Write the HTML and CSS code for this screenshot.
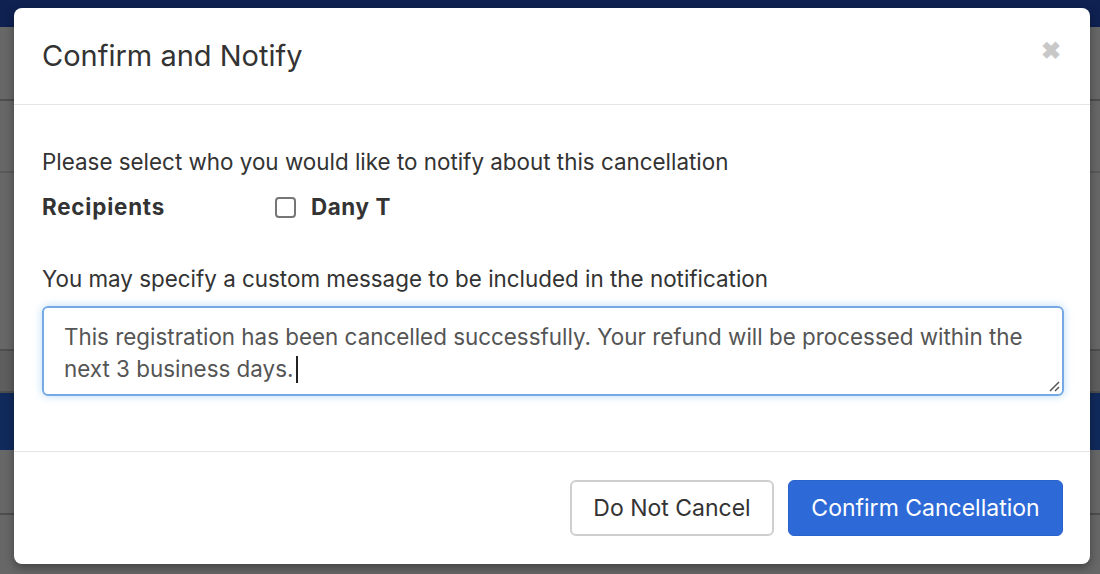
FILE: index.html
```html
<!DOCTYPE html>
<html>
<head>
<meta charset="utf-8">
<link rel="stylesheet" href="styles.css">
</head>
<body>
<div class="page">
  <div class="topbar"></div>
  <div class="row r1"></div>
  <div class="row r2"></div>
  <div class="row r3"></div>
  <div class="row r4"></div>
  <div class="navyband"></div>
  <div class="row r5"></div>
</div>
<div class="modal">
  <div class="modal-header">
    <h4 class="modal-title">Confirm and Notify</h4>
    <span class="close">&#x2716;</span>
  </div>
  <div class="modal-body">
    <p class="lead-text">Please select who you would like to notify about this cancellation</p>
    <div class="recipients">
      <span class="label">Recipients</span>
      <span class="check-item"><span class="checkbox"></span><span class="name">Dany T</span></span>
    </div>
    <p class="msg-label">You may specify a custom message to be included in the notification</p>
    <div class="textarea">
      <div class="ta-text">This registration has been cancelled successfully. Your refund will be processed within the<br>next 3 business days.<span class="caret"></span></div>
      <svg class="grip" width="12" height="12" viewBox="0 0 12 12"><path d="M11 2 L2 11 M11 7 L7 11" stroke="#555" stroke-width="1.5" fill="none"/></svg>
    </div>
  </div>
  <div class="modal-footer">
    <button class="btn btn-default">Do Not Cancel</button>
    <button class="btn btn-primary">Confirm Cancellation</button>
  </div>
</div>
</body>
</html>
```
FILE: styles.css
```css
html, body {
  margin: 0;
  padding: 0;
  width: 1100px;
  height: 574px;
  overflow: hidden;
  background: #676767;
  font-family: Inter, "Noto Sans", sans-serif;
}
.page {
  display: flex;
  flex-direction: column;
}
.topbar {
  height: 27px;
  background: #0e2150;
}
.row {
  border-bottom: 2px solid #4e4e4e;
}
.r1 { height: 72px; }
.r2 { height: 70px; border-bottom-color: #5a5a5a; }
.r3 { height: 176px; }
.r4 { height: 40px; background: #5e5e5e; }
.navyband { height: 57px; background: #102a5c; }
.r5 { height: 63px; }

.modal {
  position: absolute;
  left: 14px;
  top: 8px;
  width: 1076px;
  height: 556px;
  background: #fff;
  border-radius: 8px;
  box-shadow: 0 4px 10px rgba(0,0,0,0.35);
  display: flex;
  flex-direction: column;
  color: #333;
}
.modal-header {
  border-bottom: 1px solid #e5e5e5;
  display: flex;
  align-items: center;
  justify-content: space-between;
  padding: 0 28px 0 28px;
  box-sizing: border-box;
  height: 97px;
}
.modal-title {
  margin: 0;
  font-size: 29px;
  font-weight: 400;
  color: #333;
  position: relative;
  top: -1px;
}
.close {
  color: #c8c8c8;
  font-size: 24px;
  font-weight: 700;
  position: relative;
  top: -6px;
  right: 1px;
}
.modal-body {
  flex: 1;
  padding: 42px 26px 0 28px;
  border-bottom: 1px solid #e5e5e5;
  font-size: 22.4px;
}
.lead-text {
  margin: 0;
  line-height: 30px;
}
.recipients {
  display: flex;
  align-items: center;
  margin-top: 15px;
  line-height: 30px;
}
.label {
  font-weight: 700;
  width: 233px;
  letter-spacing: 0.8px;
}
.check-item {
  display: flex;
  align-items: center;
  font-weight: 700;
  letter-spacing: 0.6px;
}
.checkbox {
  width: 17px;
  height: 17px;
  border: 2px solid #767676;
  border-radius: 4px;
  margin-right: 15px;
}
.msg-label {
  margin: 42px 0 0 0;
  line-height: 30px;
}
.textarea {
  position: relative;
  margin-top: 12px;
  height: 90px;
  box-sizing: border-box;
  border: 2px solid #75a9e6;
  border-radius: 6px;
  box-shadow: 0 0 8px rgba(102,175,233,0.45);
  padding: 13px 20px;
  color: #555;
}
.ta-text {
  line-height: 32px;
  white-space: nowrap;
}
.caret {
  display: inline-block;
  width: 2px;
  height: 27px;
  background: #222;
  vertical-align: -6px;
  margin-left: 3px;
}
.grip {
  position: absolute;
  right: 2px;
  bottom: 2px;
}
.modal-footer {
  height: 112px;
  display: flex;
  justify-content: flex-end;
  align-items: center;
  padding: 0 27px;
  gap: 14px;
}
.btn {
  height: 56px;
  font-family: inherit;
  font-size: 23px;
  border-radius: 6px;
  padding: 0 20px;
  cursor: pointer;
}
.btn-default {
  background: #fff;
  border: 2px solid #cfcfcf;
  color: #333;
  width: 204px;
}
.btn-primary {
  background: #2e6ad7;
  border: 1px solid #2a63cb;
  color: #fff;
  width: 275px;
}
```
